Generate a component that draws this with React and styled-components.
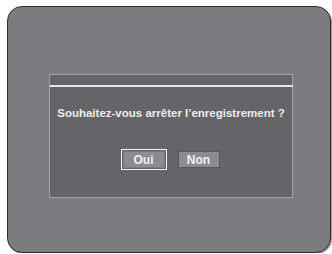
import styled, { createGlobalStyle } from "styled-components";

const GlobalStyle = createGlobalStyle`
  html, body {
    margin: 0;
    padding: 0;
    background: #ffffff;
  }
  body {
    font-family: "Liberation Sans", Arial, sans-serif;
  }
`;

const Screen = styled.div`
  box-sizing: border-box;
  width: 324px;
  height: 247px;
  margin: 6px 0 0 7px;
  padding: 67px 0 0 41px;
  background: #7c7c80;
  border: 1.5px solid #2e2e30;
  border-radius: 15px;
  box-shadow: 1px 1px 0 #9a9a9a;
`;

const Dialog = styled.div`
  box-sizing: border-box;
  width: 244px;
  height: 124px;
  background: #656569;
  border: 1px solid #a4a4a8;
  display: flex;
  flex-direction: column;
`;

const TitleBar = styled.div`
  height: 10px;
  border-bottom: 2px solid #e6e6e8;
  margin-right: -1px;
`;

const Body = styled.div`
  flex: 1;
  display: flex;
  flex-direction: column;
  align-items: center;
  padding-top: 20px;
`;

const Message = styled.p`
  margin: 0;
  font-size: 11.5px;
  line-height: 13px;
  font-weight: bold;
  color: #ececec;
  white-space: nowrap;
`;

const Buttons = styled.div`
  display: flex;
  gap: 13px;
  margin-top: 31px;
`;

const Button = styled.div`
  box-sizing: border-box;
  width: 42px;
  height: 17px;
  display: flex;
  align-items: center;
  justify-content: center;
  background: #8c8c90;
  border: 1px solid ${(p) => (p.$selected ? "#7a7a7e" : "#58585c")};
  outline: ${(p) => (p.$selected ? "1.5px solid #f4f4f4" : "none")};
  outline-offset: 1px;
  font-size: 12px;
  font-weight: bold;
  color: #f0f0f0;
`;

export default function App() {
  return (
    <>
      <GlobalStyle />
      <Screen>
        <Dialog>
          <TitleBar />
          <Body>
            <Message>Souhaitez-vous arrêter l’enregistrement ?</Message>
            <Buttons>
              <Button $selected>Oui</Button>
              <Button>Non</Button>
            </Buttons>
          </Body>
        </Dialog>
      </Screen>
    </>
  );
}
